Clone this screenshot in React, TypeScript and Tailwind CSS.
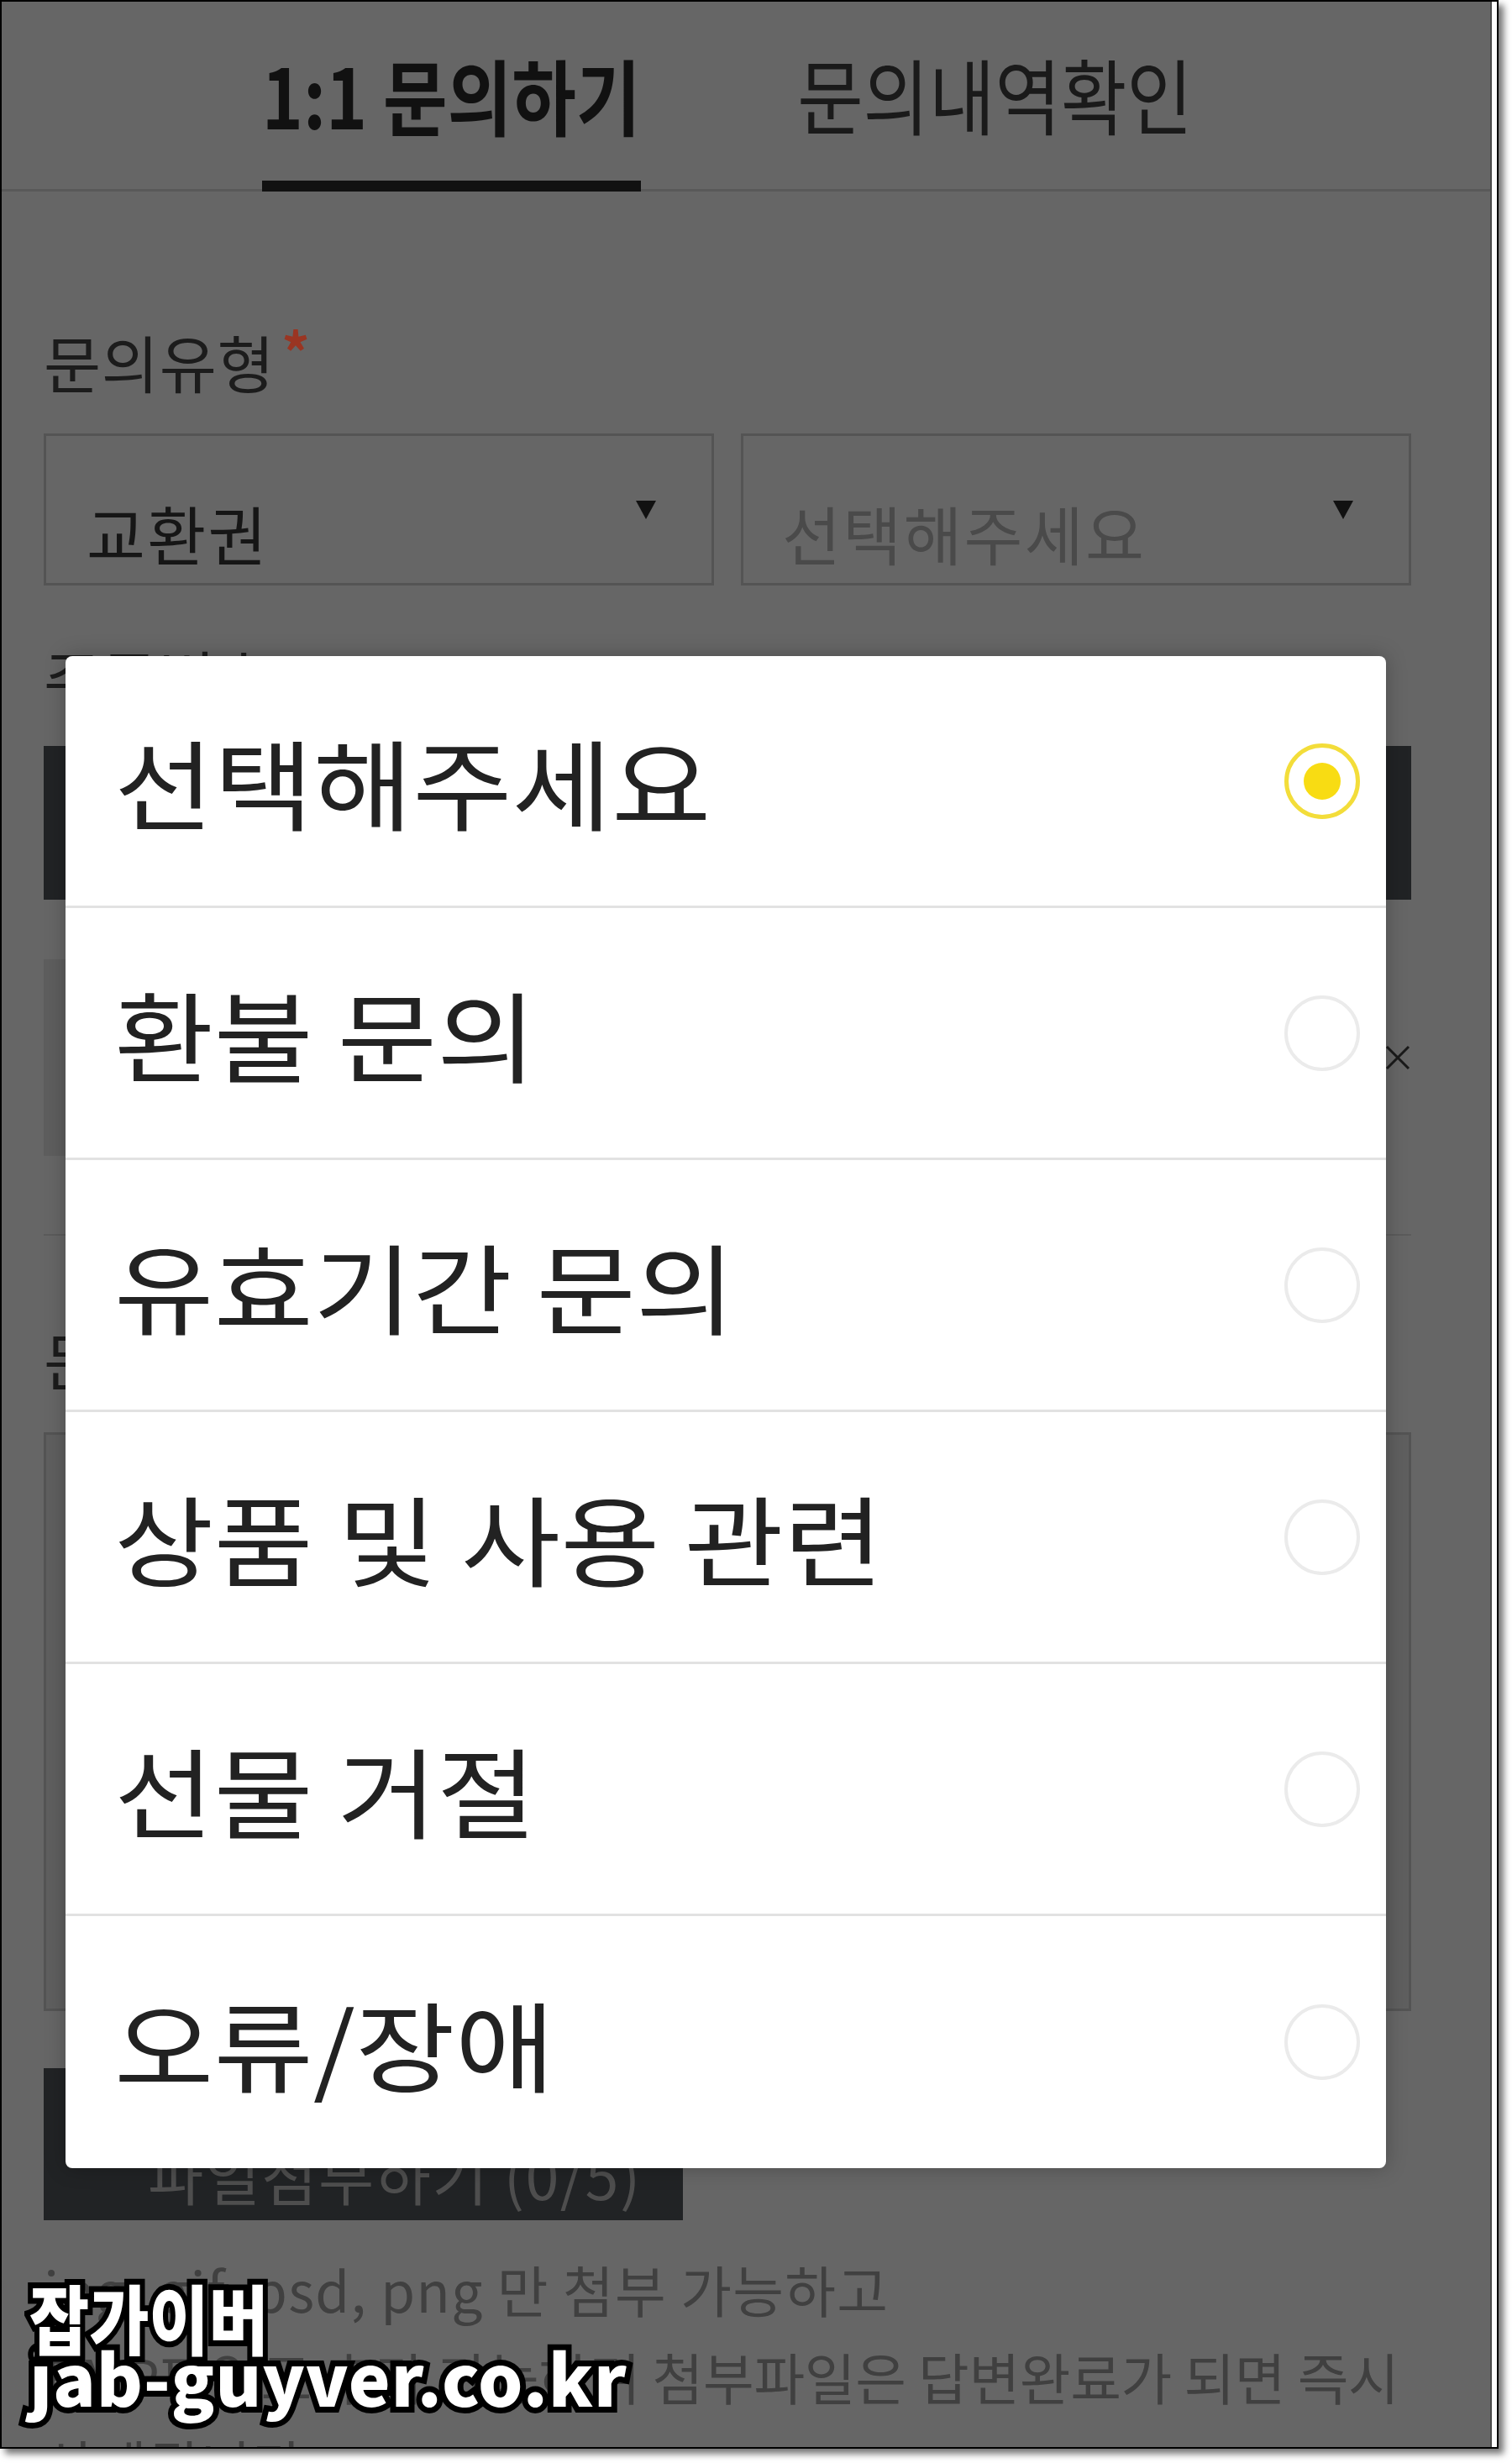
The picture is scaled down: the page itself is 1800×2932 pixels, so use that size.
import React from "react";

function Radio({ checked }: { checked: boolean }) {
  if (checked) {
    return (
      <div className="w-[90px] h-[90px] rounded-full border-[5px] border-[#f3dd3a] flex items-center justify-center shrink-0">
        <div className="w-[44px] h-[44px] rounded-full bg-[#f8dc13]" />
      </div>
    );
  }
  return <div className="w-[90px] h-[90px] rounded-full border-[4px] border-[#ebebeb] shrink-0" />;
}

function Caret() {
  return (
    <svg width="24" height="22" viewBox="0 0 24 22" className="shrink-0">
      <polygon points="0,0 24,0 12,22" fill="#111" />
    </svg>
  );
}

export default function App() {
  const options = ["선택해주세요", "환불 문의", "유효기간 문의", "상품 및 사용 관련", "선물 거절", "오류/장애"];
  return (
    <div className="w-[1800px] h-[2932px] bg-white font-['Noto_Sans_CJK_KR','Noto_Sans',sans-serif]">
      <div className="w-[1784px] h-[2915px] border-2 border-black shadow-[6px_6px_8px_rgba(0,0,0,0.55)] flex overflow-hidden">
        <div className="relative flex-1 bg-[#666666] border-r-2 border-[#4a4a4a] overflow-hidden">
          {/* Tabs */}
          <div className="flex h-[226px] border-b-[3px] border-[#595959]">
            <div className="ml-[310px] w-[451px] flex flex-col">
              <div className="flex-1 flex items-center justify-center pt-[4px]">
                <span className="text-[98px] font-bold leading-none scale-x-[0.85] text-[#111] whitespace-nowrap">1:1 문의하기</span>
              </div>
              <div className="h-[13px] bg-[#111] -mb-[3px]" />
            </div>
            <div className="ml-[190px] w-[462px] flex items-center justify-center pb-[7px]">
              <span className="text-[98px] leading-none scale-x-[0.87] text-[#1a1a1a] whitespace-nowrap">문의내역확인</span>
            </div>
          </div>

          {/* Form body */}
          <div className="flex flex-col pl-[50px] pr-[94px]">
            <div className="mt-[165px] flex items-start text-[74px] leading-none text-[#1c1c1c]">
              <span className="tracking-[0.01em]">문의유형</span>
              <span className="ml-[8px] -mt-[10px] text-[66px] leading-none font-bold text-[#9a3522]">*</span>
            </div>
            <div className="mt-[49px] flex gap-[32px]">
              <div className="w-[798px] h-[181px] border-[3px] border-[#545454] flex items-center justify-between pl-[48px] pr-[66px]">
                <span className="mt-[54px] text-[76px] tracking-[0.03em] leading-none text-[#161616]">교환권</span>
                <Caret />
              </div>
              <div className="w-[798px] h-[181px] border-[3px] border-[#545454] flex items-center justify-between pl-[46px] pr-[66px]">
                <span className="mt-[54px] text-[76px] tracking-[0.03em] leading-none text-[#4a4a4a]">선택해주세요</span>
                <Caret />
              </div>
            </div>

            <div className="mt-[71px] text-[74px] leading-none text-[#1c1c1c]">주문번호</div>
            <div className="mt-[46px] h-[183px] bg-[#212325]" />

            <div className="mt-[71px] h-[234px] flex items-center justify-between">
              <div className="w-[1450px] h-full bg-[#5e5e5e]" />
              <svg width="32" height="32" viewBox="0 0 32 32">
                <path d="M3 3 L29 29 M29 3 L3 29" stroke="#1a1a1a" strokeWidth="3" />
              </svg>
            </div>
            <div className="mt-[93px] h-[2px] bg-[#5b5b5b]" />

            <div className="mt-[109px] text-[74px] leading-none text-[#1c1c1c]">문의내용</div>
            <div className="mt-[51px] h-[689px] border-[3px] border-[#545454] bg-[#5f5f5f]" />

            <div className="mt-[68px] w-[761px] h-[181px] bg-[#212325] flex items-center pl-[124px]">
              <span className="mt-[70px] text-[72px] tracking-[0.02em] leading-none text-[#4e4e4e] whitespace-nowrap">파일첨부하기 (0/5)</span>
            </div>

            <div className="mt-[29px] text-[66px] leading-[104px] text-[#404040] whitespace-nowrap">
              <div className="tracking-[0.02em]">jpg, gif, psd, png 만 첨부 가능하고</div>
              <div className="tracking-[-0.005em]">BMP파일도 추가 가능하며 첨부파일은 답변완료가 되면 즉시</div>
              <div className="tracking-[0.02em]">삭제됩니다.</div>
            </div>
          </div>

          {/* Modal */}
          <div className="absolute left-[76px] top-[779px] w-[1572px] bg-white rounded-[8px] shadow-[0_0_24px_rgba(0,0,0,0.25)] overflow-hidden">
            {options.map((o, i) => (
              <div
                key={o}
                className={`h-[300px] flex items-center justify-between pl-[58px] pr-[31px] ${i < options.length - 1 ? "border-b-[3px] border-[#e2e2e2]" : ""}`}
              >
                <span className="text-[117px] leading-none text-[#222] whitespace-nowrap scale-x-[1.1] origin-left">{o}</span>
                <Radio checked={i === 0} />
              </div>
            ))}
          </div>

          {/* Watermark */}
          <div className="absolute left-[33px] top-[2714px] font-black text-white [-webkit-text-stroke:14px_#000] [paint-order:stroke_fill]">
            <div className="text-[90px] leading-[82px] scale-x-[0.86] origin-left whitespace-nowrap">잡가이버</div>
            <div className="-mt-[10px] text-[84px] leading-[82px] tracking-[0.01em] whitespace-nowrap">jab-guyver.co.kr</div>
          </div>
        </div>
        <div className="w-[6px] bg-white" />
      </div>
    </div>
  );
}
